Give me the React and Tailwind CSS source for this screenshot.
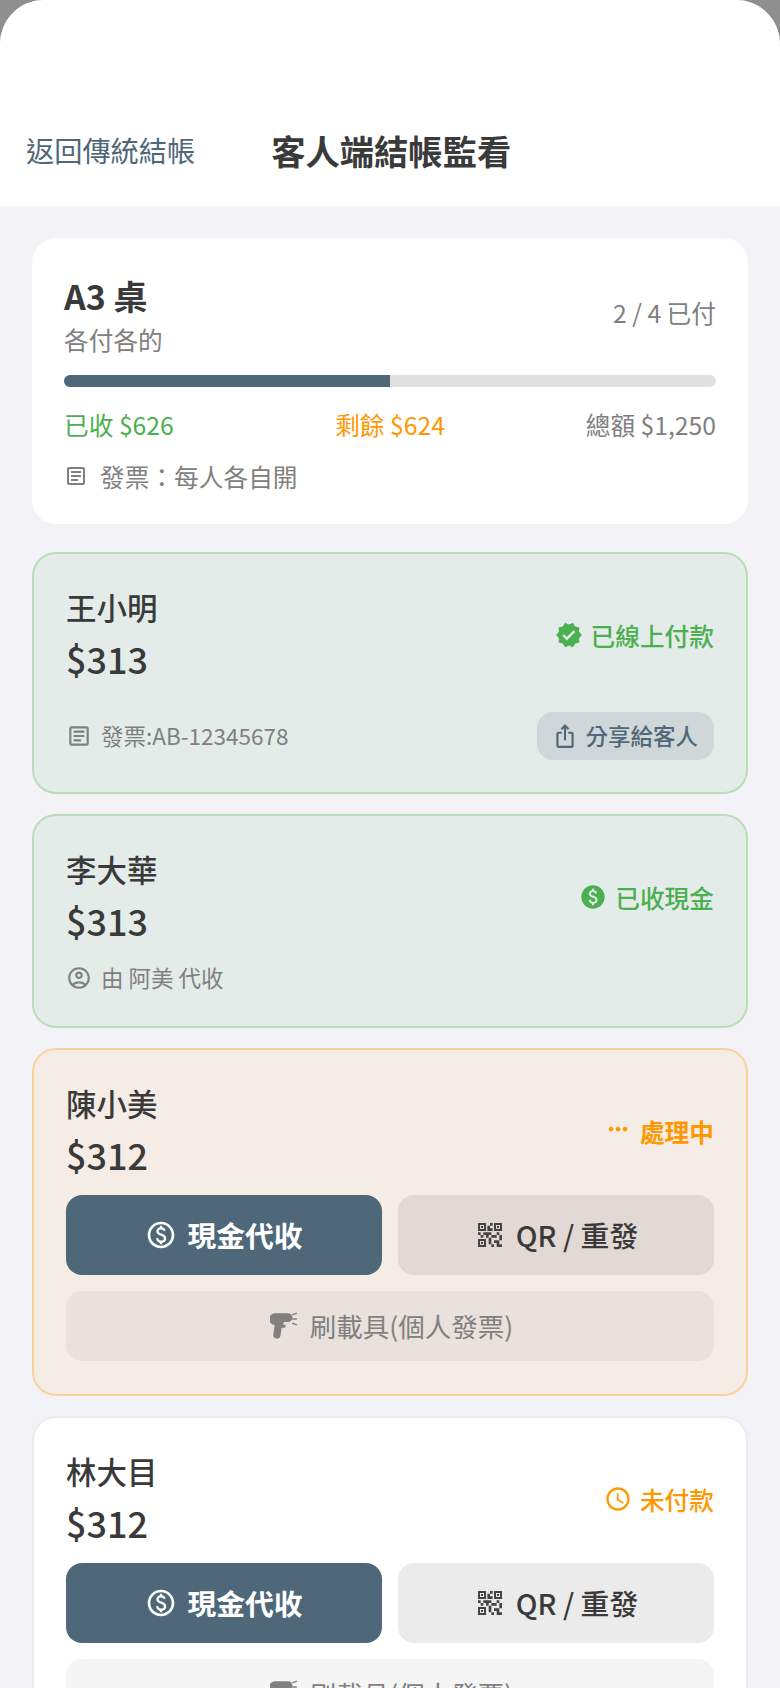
import React from "react";
import { MdVerified, MdPaid, MdOutlineArticle, MdOutlineAccountCircle, MdIosShare, MdOutlinePaid, MdOutlineQrCode2, MdMoreHoriz, MdOutlineSchedule } from "react-icons/md";

const Scanner = ({ className }) => (
  <svg viewBox="0 0 24 24" className={className} fill="currentColor">
    <path d="M4.500 1H15.500a3.200 3.200 0 0 1 0 7.500H12L11 11H13.500L13 13.500H10L9 20a3 3 0 0 1-6.200-.6L4 11A5 5 0 0 1 4.500 1Z" />
    <path d="M19 2.500l4-1.500M19 6h4M19 9.500l4 1.500" stroke="currentColor" strokeWidth="1.200" fill="none" />
  </svg>
);

const Actions = ({ secondary, tertiary }) => (
  <div className="flex flex-col gap-4">
    <div className="grid grid-cols-2 gap-4">
      <button className="h-20 rounded-2xl bg-[#4f6879] text-white flex items-center justify-center gap-2.5 text-[28.8px] font-bold">
        <MdOutlinePaid className="text-[32px]" />
        <span>現金代收</span>
      </button>
      <button className={`h-20 rounded-2xl ${secondary} text-[#3a3a3a] flex items-center justify-center gap-2.5 text-[28.8px] font-medium`}>
        <MdOutlineQrCode2 className="text-[32px] text-[#444444]" />
        <span>QR / 重發</span>
      </button>
    </div>
    <button className={`h-[70px] pl-[3px] rounded-2xl ${tertiary} text-[#808080] flex items-center justify-center gap-3 text-[26.5px]`}>
      <Scanner className="w-7 h-7" />
      <span>刷載具(個人發票)</span>
    </button>
  </div>
);

const Person = ({ name, amount }) => (
  <div>
    <div className="text-[30.5px] leading-[42px] font-medium text-[#3a3a3a]">{name}</div>
    <div className="mt-[3px] text-[36px] leading-[54px] font-medium text-[#3a3a3a]">{amount}</div>
  </div>
);

const Status = ({ color, icon, text, weight }) => (
  <div className={`flex items-center gap-2 text-[24.7px] ${weight} ${color}`}>
    {icon}
    <span>{text}</span>
  </div>
);

export default function App() {
  return (
    <div className="w-[780px] h-[1688px] overflow-hidden bg-[#8f8f8f] font-['Noto_Sans_CJK_TC','Noto_Sans',sans-serif]">
      <div className="h-full rounded-t-[44px] overflow-hidden bg-[#f2f2f7]">
        <header className="h-[206px] bg-white flex items-end pb-[34px] pl-[26px]">
          <button className="text-[28.2px] leading-[44px] text-[#4f6879]">返回傳統結帳</button>
          <h1 className="ml-[76px] text-[34.3px] leading-[44px] font-bold text-[#3a3a3a]">客人端結帳監看</h1>
        </header>
        <main className="flex flex-col gap-5 pt-8 px-8">
          <section className="h-[286px] rounded-[24px] bg-white p-8 mb-2">
            <div className="flex items-center justify-between">
              <div>
                <div className="text-[34px] leading-[52px] font-bold text-[#3a3a3a]">A3 桌</div>
                <div className="text-[24.7px] leading-[34px] text-[#808080]">各付各的</div>
              </div>
              <div className="text-[24.7px] text-[#808080]">2 / 4 已付</div>
            </div>
            <div className="mt-[19px] h-3 rounded-full bg-[#e0e0e0] overflow-hidden">
              <div className="h-full w-1/2 bg-[#4f6879]" />
            </div>
            <div className="mt-[19px] grid grid-cols-3 text-[24.7px] leading-9">
              <span className="text-[#4caf50]">已收 $626</span>
              <span className="text-[#ff9800] text-center">剩餘 $624</span>
              <span className="text-[#808080] text-right">總額 $1,250</span>
            </div>
            <div className="mt-4 flex items-center gap-3 text-[24.7px] leading-9 text-[#808080]">
              <MdOutlineArticle className="text-[24px]" />
              <span>發票：每人各自開</span>
            </div>
          </section>

          <section className="h-[242px] rounded-[24px] border-2 border-[#b9dcb9] bg-[#e4ece9] px-8 pt-8">
            <div className="flex items-center justify-between">
              <Person name="王小明" amount="$313" />
              <Status weight="font-medium" color="text-[#4caf50]" icon={<MdVerified className="text-[28px]" />} text="已線上付款" />
            </div>
            <div className="mt-[27px] flex items-center justify-between">
              <div className="flex items-center gap-[9px] text-[22.5px] text-[#808080]">
                <MdOutlineArticle className="text-[26px]" />
                <span>發票:AB-12345678</span>
              </div>
              <button className="h-12 pl-[15px] pr-4 rounded-2xl bg-[#cfd7d9] text-[#4f6879] flex items-center gap-[7px] text-[22.5px] font-medium">
                <MdIosShare className="text-[26px]" />
                <span>分享給客人</span>
              </button>
            </div>
          </section>

          <section className="h-[214px] rounded-[24px] border-2 border-[#b9dcb9] bg-[#e4ece9] px-8 pt-8">
            <div className="flex items-center justify-between">
              <Person name="李大華" amount="$313" />
              <Status weight="font-medium" color="text-[#4caf50]" icon={<MdPaid className="text-[28px]" />} text="已收現金" />
            </div>
            <div className="mt-[14px] flex items-center gap-[9px] text-[22.5px] text-[#808080]">
              <MdOutlineAccountCircle className="text-[26px]" />
              <span>由 阿美 代收</span>
            </div>
          </section>

          <section className="h-[348px] rounded-[24px] border-2 border-[#f8d29c] bg-[#f5ece6] px-8 pt-8">
            <div className="flex items-center justify-between mb-[14px]">
              <Person name="陳小美" amount="$312" />
              <Status weight="font-bold" color="text-[#ff9800]" icon={<MdMoreHoriz className="text-[28px] -translate-y-0.5" />} text="處理中" />
            </div>
            <Actions secondary="bg-[#e2d9d4]" tertiary="bg-[#e8e1dc]" />
          </section>

          <section className="h-[348px] rounded-[24px] border-2 border-[#ececf0] bg-white px-8 pt-8">
            <div className="flex items-center justify-between mb-[14px]">
              <Person name="林大目" amount="$312" />
              <Status weight="font-medium" color="text-[#ff9800]" icon={<MdOutlineSchedule className="text-[28px]" />} text="未付款" />
            </div>
            <Actions secondary="bg-[#ebebeb]" tertiary="bg-[#f5f5f5]" />
          </section>
        </main>
      </div>
    </div>
  );
}
